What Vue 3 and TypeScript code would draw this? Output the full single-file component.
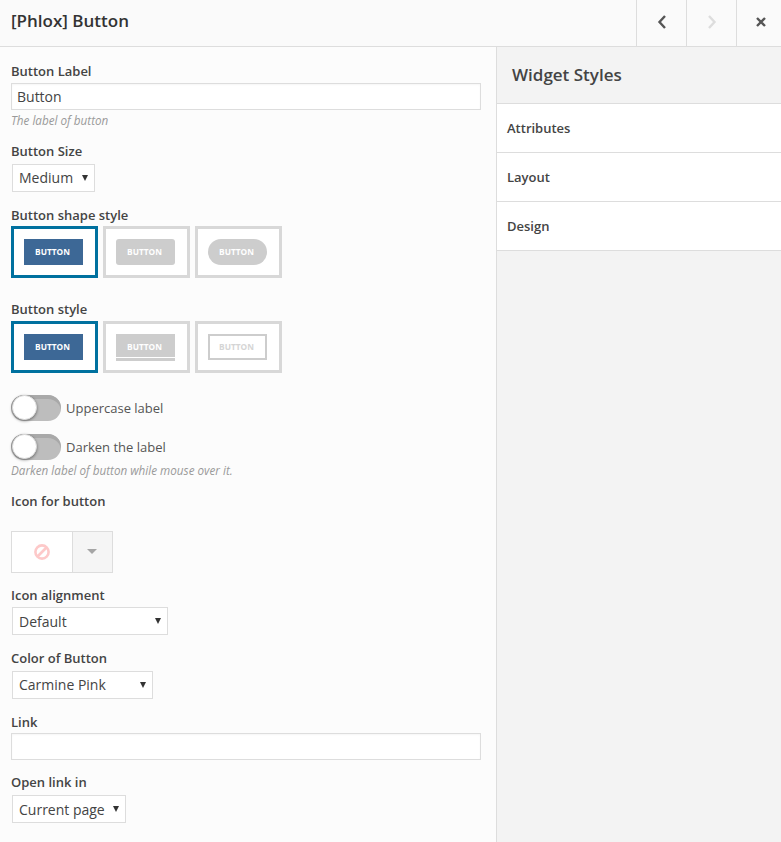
<script setup lang="ts">
const shapes = [
  { cls: 'square', active: true },
  { cls: 'rounded', active: false },
  { cls: 'pill', active: false },
]
const styles = [
  { cls: 'square', active: true },
  { cls: 'underlined', active: false },
  { cls: 'outline', active: false },
]
const tabs = ['Attributes', 'Layout', 'Design']
</script>

<template>
  <div class="panel">
    <header class="topbar">
      <h1 class="title">[Phlox] Button</h1>
      <div class="nav">
        <button class="nav-btn" type="button" aria-label="Previous">
          <svg width="12" height="16" viewBox="0 0 12 16"><path d="M9 2 L3.5 8 L9 14" fill="none" stroke="#555" stroke-width="2.4" /></svg>
        </button>
        <button class="nav-btn" type="button" aria-label="Next">
          <svg width="12" height="16" viewBox="0 0 12 16"><path d="M3 2 L8.5 8 L3 14" fill="none" stroke="#ddd" stroke-width="2.4" /></svg>
        </button>
        <button class="nav-btn close" type="button" aria-label="Close">
          <svg width="12" height="12" viewBox="0 0 12 12"><path d="M2 2 L10 10 M10 2 L2 10" fill="none" stroke="#555" stroke-width="2.4" /></svg>
        </button>
      </div>
    </header>

    <div class="body">
      <main class="form">
        <div class="label first">Button Label</div>
        <input class="text-input" type="text" value="Button" />
        <p class="help">The label of button</p>

        <div class="label size-label">Button Size</div>
        <select class="select size-select"><option>Medium</option></select>

        <div class="label shape-label">Button shape style</div>
        <div class="tiles">
          <div v-for="s in shapes" :key="s.cls" class="tile" :class="{ active: s.active }">
            <span class="sample" :class="s.cls">BUTTON</span>
          </div>
        </div>

        <div class="label style-label">Button style</div>
        <div class="tiles">
          <div v-for="s in styles" :key="s.cls" class="tile" :class="{ active: s.active }">
            <span class="sample" :class="s.cls">BUTTON</span>
          </div>
        </div>

        <div class="switch-row upper">
          <span class="switch"><span class="knob"></span></span>
          <span class="switch-text">Uppercase label</span>
        </div>
        <div class="switch-row darken">
          <span class="switch"><span class="knob"></span></span>
          <span class="switch-text">Darken the label</span>
        </div>
        <p class="help help-darken">Darken label of button while mouse over it.</p>

        <div class="label icon-label">Icon for button</div>
        <div class="icon-picker">
          <div class="icon-current">
            <svg width="18" height="18" viewBox="0 0 18 18">
              <circle cx="9" cy="9" r="6.6" fill="none" stroke="#fdc9c9" stroke-width="2.6" />
              <path d="M4.5 13.5 L13.5 4.5" stroke="#fdc9c9" stroke-width="2.6" />
            </svg>
          </div>
          <div class="icon-toggle"><span class="caret"></span></div>
        </div>

        <div class="label align-label">Icon alignment</div>
        <select class="select align-select"><option>Default</option></select>

        <div class="label color-label">Color of Button</div>
        <select class="select color-select"><option>Carmine Pink</option></select>

        <div class="label link-label">Link</div>
        <input class="text-input" type="text" />

        <div class="label open-label">Open link in</div>
        <select class="select open-select"><option>Current page</option></select>
      </main>

      <aside class="side">
        <div class="side-title">Widget Styles</div>
        <div v-for="t in tabs" :key="t" class="side-tab">{{ t }}</div>
      </aside>
    </div>
  </div>
</template>

<style>
html,
body {
  margin: 0;
  background: #fcfcfc;
}
</style>

<style scoped>
.panel {
  width: 781px;
  height: 842px;
  overflow: hidden;
  display: flex;
  flex-direction: column;
  font-family: 'Open Sans', 'Noto Sans', sans-serif;
  color: #444;
  background: #fcfcfc;
}

.topbar {
  height: 46px;
  flex-shrink: 0;
  display: flex;
  align-items: stretch;
  justify-content: space-between;
  background: #fafafa;
  border-bottom: 1px solid #ddd;
}

.title {
  margin: 0;
  padding-left: 11px;
  font-size: 17px;
  font-weight: 580;
  line-height: 41px;
  color: #333;
}

.nav {
  display: flex;
}

.nav-btn {
  width: 50px;
  padding: 0 0 2px;
  display: flex;
  align-items: center;
  justify-content: center;
  background: transparent;
  border: 0;
  border-left: 1px solid #ddd;
}

.nav-btn.close {
  width: 45px;
  padding-left: 4px;
}

.body {
  flex: 1;
  display: flex;
  min-height: 0;
}

.form {
  width: 497px;
  flex-shrink: 0;
  box-sizing: border-box;
  padding: 0 15px 0 11px;
  border-right: 1px solid #ddd;
}

.label {
  font-size: 13px;
  font-weight: 600;
  line-height: 18px;
  color: #444;
}

.first { margin-top: 15px; margin-bottom: 3px; }
.size-label { margin-top: 14px; margin-bottom: 4px; }
.shape-label { margin-top: 14px; margin-bottom: 2px; }
.style-label { margin-top: 22px; margin-bottom: 3px; }
.icon-label { margin-top: 14px; margin-bottom: 21px; }
.align-label { margin-top: 13px; margin-bottom: 3px; }
.color-label { margin-top: 14px; margin-bottom: 4px; }
.link-label { margin-top: 14px; margin-bottom: 2px; }
.open-label { margin-top: 13px; margin-bottom: 4px; }

.text-input {
  display: block;
  width: 470px;
  height: 27px;
  box-sizing: border-box;
  padding: 0 5px;
  margin: 0;
  font: 14px 'Open Sans', sans-serif;
  color: #444;
  background: #fff;
  border: 1px solid #ddd;
  border-radius: 0;
  outline: none;
  box-shadow: inset 0 1px 2px rgba(0, 0, 0, 0.04);
}

.help {
  margin: 3px 0 0;
  font-size: 11.7px;
  font-style: italic;
  line-height: 15px;
  color: #9a9a9a;
}

.select {
  display: block;
  height: 28px;
  margin-left: 1px;
  padding: 0 6px 2px;
  box-sizing: border-box;
  appearance: none;
  font: 14px 'Open Sans', sans-serif;
  color: #444;
  background: #fff url("data:image/svg+xml,%3Csvg xmlns='http://www.w3.org/2000/svg' width='6' height='6'%3E%3Cpath d='M0 0H6L3 6Z' fill='%23333'/%3E%3C/svg%3E") no-repeat right 6px top 10px;
  border: 1px solid #ddd;
  border-radius: 0;
  outline: none;
}

.size-select { width: 83px; }
.align-select { width: 156px; padding-bottom: 0; }
.color-select { width: 141px; }
.open-select { width: 114px; padding-bottom: 0; }

.tiles {
  display: flex;
  gap: 5px;
}

.tile {
  width: 87px;
  height: 52px;
  box-sizing: border-box;
  display: flex;
  align-items: center;
  justify-content: center;
  border: 3px solid #d8d8d8;
  background: #fff;
}

.tile.active {
  border-color: #00719f;
}

.sample {
  width: 59px;
  height: 26px;
  margin-right: 2px;
  padding: 0 2px 2px 0;
  box-sizing: border-box;
  display: flex;
  align-items: center;
  justify-content: center;
  font-size: 8.3px;
  font-weight: 700;
  color: #fff;
  background: #cdcdcd;
}

.tile.active .sample {
  background: #3d6896;
}

.sample.rounded {
  border-radius: 3px;
}

.sample.pill {
  border-radius: 13px;
}

.sample.underlined {
  height: 27px;
  margin-top: 1px;
  padding-bottom: 0;
  border-bottom: 3px solid #cdcdcd;
  box-shadow: inset 0 -1px 0 #fff;
}

.sample.outline {
  background: #fff;
  color: #d5d5d5;
  padding-bottom: 2px;
  border: 2px solid #cdcdcd;
}

.switch-row {
  display: flex;
  align-items: center;
  height: 26px;
  gap: 5px;
}

.upper { margin-top: 22px; }
.darken { margin-top: 13px; }
.help-darken { margin-top: 3px; }

.switch {
  position: relative;
  width: 50px;
  height: 26px;
  border-radius: 13px;
  background: #bdbdbd;
  box-shadow: inset 0 4px 0 #a9a9a9;
}

.knob {
  position: absolute;
  left: 1px;
  top: 0;
  width: 25px;
  height: 25px;
  box-sizing: border-box;
  border-radius: 50%;
  background: #fff;
  border: 1px solid #ddd;
  box-shadow: 0 1px 3px rgba(0, 0, 0, 0.45);
}

.switch-text {
  font-size: 13px;
  color: #555;
}

.icon-picker {
  display: flex;
  width: 102px;
  height: 42px;
  box-sizing: border-box;
  border: 1px solid #ddd;
}

.icon-current {
  width: 60px;
  display: flex;
  align-items: center;
  justify-content: center;
  background: #fff;
  border-right: 1px solid #ddd;
}

.icon-toggle {
  flex: 1;
  display: flex;
  align-items: center;
  justify-content: center;
  background: #f5f5f5;
}

.caret {
  width: 0;
  height: 0;
  margin-top: -2px;
  margin-right: 2px;
  border-left: 5px solid transparent;
  border-right: 5px solid transparent;
  border-top: 5px solid #a5a5a5;
}

.side {
  flex: 1;
  background: #f3f3f3;
}

.side-title {
  height: 57px;
  box-sizing: border-box;
  padding-left: 15px;
  font-size: 17px;
  font-weight: 580;
  line-height: 56px;
  color: #444;
  border-bottom: 1px solid #ddd;
}

.side-tab {
  height: 49px;
  box-sizing: border-box;
  padding-left: 10px;
  font-size: 13px;
  font-weight: 600;
  line-height: 48px;
  color: #444;
  background: #fff;
  border-bottom: 1px solid #ddd;
}
</style>
